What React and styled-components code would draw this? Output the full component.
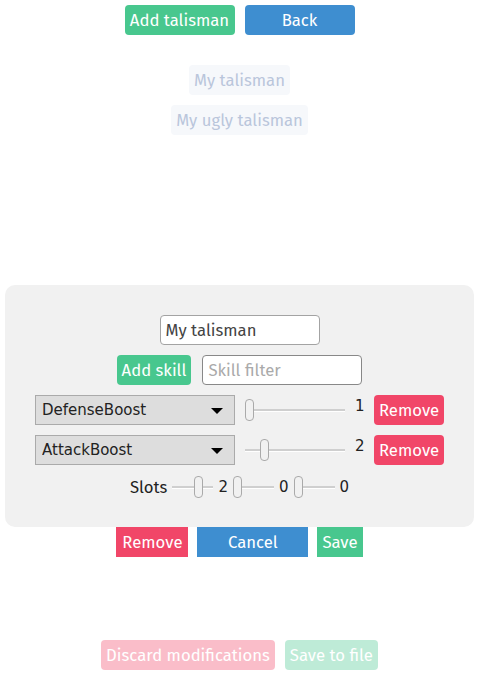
import React from "react";
import styled, { createGlobalStyle } from "styled-components";

const GlobalStyle = createGlobalStyle`
  body {
    margin: 0;
    font-family: "Fira Sans", "Open Sans", sans-serif;
    background: #fff;
  }
`;

const colors = {
  green: "#48c78e",
  blue: "#3e8ed0",
  red: "#f14668",
};

const Page = styled.div`
  display: flex;
  flex-direction: column;
  align-items: center;
  padding-top: 5px;
`;

const Row = styled.div`
  display: flex;
  justify-content: center;
  align-items: center;
  gap: ${(p) => p.$gap || 10}px;
  margin-top: ${(p) => p.$top || 0}px;
`;

const Button = styled.button`
  height: 30px;
  width: ${(p) => (p.$width ? `${p.$width}px` : "auto")};
  padding: 0 5px;
  border: none;
  border-radius: ${(p) => (p.$square ? 0 : 4)}px;
  background: ${(p) => colors[p.$color]};
  color: #fff;
  font-family: inherit;
  font-size: 16.7px;
  cursor: pointer;
  opacity: ${(p) => (p.$faded ? 0.35 : 1)};
`;

const List = styled.div`
  display: flex;
  flex-direction: column;
  align-items: center;
  gap: 10px;
  margin-top: 30px;
`;

const ListItem = styled.button`
  height: 30px;
  padding: 0 5px;
  border: none;
  border-radius: 4px;
  background: #f6f8fb;
  color: #bac6db;
  font-family: inherit;
  font-size: 16.7px;
`;

const Panel = styled.div`
  align-self: stretch;
  margin: 150px 5px 0;
  background: #f1f1f1;
  border-radius: 10px;
  padding: 30px 0 28px;
  display: flex;
  flex-direction: column;
  align-items: center;
  gap: 10px;
`;

const TextInput = styled.input`
  box-sizing: border-box;
  width: 160px;
  height: 30px;
  border: 1px solid #a3a3a3;
  border-radius: 4px;
  background: #fff;
  padding: 0 5px;
  font-family: inherit;
  font-size: 16.7px;
  color: #444;
  outline: none;
  &::placeholder {
    color: #aaa;
  }
  &:focus {
    border-color: #888;
  }
`;

const SelectBox = styled.div`
  position: relative;
  width: 200px;
  height: 30px;
  &::after {
    content: "";
    position: absolute;
    right: 12px;
    top: 13px;
    border-left: 6px solid transparent;
    border-right: 6px solid transparent;
    border-top: 6px solid #000;
    pointer-events: none;
  }
`;

const Select = styled.select`
  appearance: none;
  box-sizing: border-box;
  width: 100%;
  height: 100%;
  border: 1px solid #aaa;
  border-radius: 0;
  background: #dddddd;
  padding: 0 6px;
  font-family: "DejaVu Sans", sans-serif;
  font-size: 15px;
  color: #222;
`;

const Range = styled.input`
  -webkit-appearance: none;
  appearance: none;
  width: ${(p) => p.$width}px;
  height: 24px;
  margin: 0;
  background: transparent;
  &::-webkit-slider-runnable-track {
    height: 2px;
    background: #cfcfcf;
    box-shadow: 0 1px 0 #fff;
  }
  &::-webkit-slider-thumb {
    -webkit-appearance: none;
    box-sizing: border-box;
    width: 9px;
    height: 22px;
    margin-top: -10px;
    border: 1px solid #aaa;
    border-radius: 4px;
    background: #f1f1f1;
  }
`;

const Value = styled.span`
  font-family: "DejaVu Sans", sans-serif;
  font-size: 15px;
  color: #222;
  width: ${(p) => p.$width || "auto"};
  text-align: right;
  margin-top: ${(p) => p.$up || 0}px;
`;

const Label = styled.span`
  font-size: 16.7px;
  color: #222;
`;

const SlotsRow = styled.div`
  display: flex;
  align-items: center;
  gap: 5px;
`;

const skills = [
  { name: "DefenseBoost", value: 1 },
  { name: "AttackBoost", value: 2 },
];

const slots = [2, 0, 0];

const SkillRow = ({ skill }) => (
  <Row $gap={10}>
    <SelectBox>
      <Select defaultValue={skill.name}>
        <option>DefenseBoost</option>
        <option>AttackBoost</option>
      </Select>
    </SelectBox>
    <Range type="range" min={1} max={7} defaultValue={skill.value} $width={100} />
    <Value $width="9px" $up={-8}>{skill.value}</Value>
    <Button $color="red" $width={70}>Remove</Button>
  </Row>
);

const App = () => {
  return (
    <Page>
      <GlobalStyle />
      <Row $gap={10}>
        <Button $color="green" $width={110}>Add talisman</Button>
        <Button $color="blue" $width={110}>Back</Button>
      </Row>
      <List>
        <ListItem>My talisman</ListItem>
        <ListItem>My ugly talisman</ListItem>
      </List>
      <Panel>
        <TextInput defaultValue="My talisman" />
        <Row $gap={11}>
          <Button $color="green">Add skill</Button>
          <TextInput placeholder="Skill filter" autoFocus />
        </Row>
        {skills.map((s) => (
          <SkillRow key={s.name} skill={s} />
        ))}
        <SlotsRow>
          <Label>Slots</Label>
          {slots.map((v, i) => (
            <React.Fragment key={i}>
              <Range type="range" min={0} max={3} defaultValue={v} $width={41} />
              <Value>{v}</Value>
            </React.Fragment>
          ))}
        </SlotsRow>
      </Panel>
      <Row $gap={9}>
        <Button $color="red" $square $width={72}>Remove</Button>
        <Button $color="blue" $square $width={111}>Cancel</Button>
        <Button $color="green" $square>Save</Button>
      </Row>
      <Row $gap={10} $top={83}>
        <Button $color="red" $faded>Discard modifications</Button>
        <Button $color="green" $faded>Save to file</Button>
      </Row>
    </Page>
  );
};

export default App;
